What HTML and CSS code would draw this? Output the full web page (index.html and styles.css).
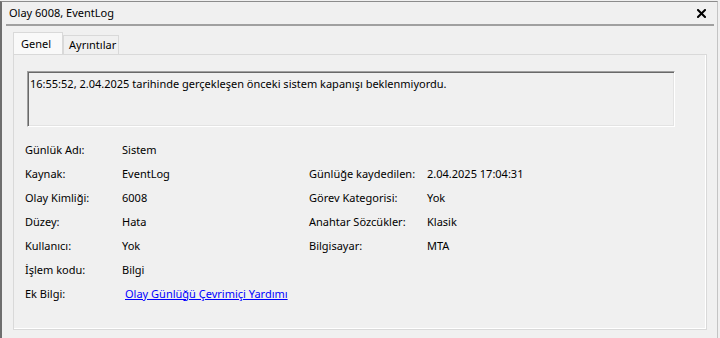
FILE: index.html
```html
<!DOCTYPE html>
<html lang="tr">
<head>
<meta charset="utf-8">
<title>Olay 6008, EventLog</title>
<link rel="stylesheet" href="styles.css">
</head>
<body>
<div class="window">
  <div class="titlebar">
    <span class="title">Olay 6008, EventLog</span>
    <span class="close" aria-label="Kapat">
      <svg width="9" height="9" viewBox="0 0 9 9"><path d="M1 1 L8 8 M8 1 L1 8" stroke="#000" stroke-width="2" stroke-linecap="square"/></svg>
    </span>
  </div>
  <div class="separator"></div>
  <div class="tabs">
    <div class="tab active">Genel</div>
    <div class="tab">Ayrıntılar</div>
  </div>
  <div class="panel">
    <div class="desc">16:55:52, 2.04.2025 tarihinde gerçekleşen önceki sistem kapanışı beklenmiyordu.</div>
    <div class="props">
      <span>Günlük Adı:</span><span>Sistem</span><span></span><span></span>
      <span>Kaynak:</span><span>EventLog</span><span>Günlüğe kaydedilen:</span><span>2.04.2025 17:04:31</span>
      <span>Olay Kimliği:</span><span>6008</span><span>Görev Kategorisi:</span><span>Yok</span>
      <span>Düzey:</span><span>Hata</span><span>Anahtar Sözcükler:</span><span>Klasik</span>
      <span>Kullanıcı:</span><span>Yok</span><span>Bilgisayar:</span><span>MTA</span>
      <span>İşlem kodu:</span><span>Bilgi</span><span></span><span></span>
      <span>Ek Bilgi:</span><span class="wide"><a class="link" href="#">Olay Günlüğü Çevrimiçi Yardımı</a></span>
    </div>
  </div>
</div>
</body>
</html>
```
FILE: styles.css
```css
html, body {
  margin: 0;
  padding: 0;
  background: #f0f0f0;
}
body {
  width: 720px;
  height: 338px;
  overflow: hidden;
  padding-top: 1px;
  box-sizing: border-box;
  font-family: "Noto Sans", "Liberation Sans", sans-serif;
  font-size: 11px;
  color: #000;
}
.window {
  width: 718px;
  height: 337px;
  box-sizing: border-box;
  border-top: 1px solid #8c8c8c;
  border-left: 2px solid #6e6e6e;
  border-right: 1px solid #c4c4c4;
  background: #f0f0f0;
}
.titlebar {
  height: 22px;
  display: flex;
  align-items: center;
  justify-content: space-between;
  padding: 0 11px 0 7px;
}
.title {
  line-height: 22px;
}
.close {
  display: flex;
  padding-top: 1px;
}
.separator {
  height: 2px;
  background: #a0a0a0;
  margin: 0 3px 0 4px;
}
.tabs {
  display: flex;
  align-items: flex-end;
  margin: 6px 0 0 11px;
  height: 22px;
}
.tab {
  box-sizing: border-box;
  height: 19px;
  line-height: 18px;
  width: 56px;
  padding: 0 0 0 5px;
  border: 1px solid #d9d9d9;
  border-bottom: none;
  background: #f0f0f0;
}
.tab.active {
  height: 22px;
  line-height: 21px;
  width: 50px;
  padding: 0 0 0 7px;
  background: #f9f9f9;
  border-color: #d9d9d9;
}
.panel {
  width: 694px;
  height: 276px;
  box-sizing: border-box;
  margin-left: 11px;
  border: 1px solid #d9d9d9;
  box-shadow: inset -1px -1px 0 #ffffff;
  padding: 16px 0 0 13px;
}
.desc {
  width: 648px;
  height: 56px;
  box-sizing: border-box;
  border: 1px solid;
  border-color: #a0a0a0 #ffffff #ffffff #a0a0a0;
  box-shadow: inset 1px 1px 0 #696969, inset -1px -1px 0 #e3e3e3;
  padding: 3px 0 0 2px;
  line-height: 17px;
}
.props {
  margin: 10px 0 0 -2px;
  display: grid;
  grid-template-columns: 97px 187px 118px auto;
  grid-auto-rows: 24px;
  align-items: center;
}
.wide {
  grid-column: span 3;
}
.link {
  color: #0000ff;
  text-decoration: underline;
  padding-left: 3px;
}
```
